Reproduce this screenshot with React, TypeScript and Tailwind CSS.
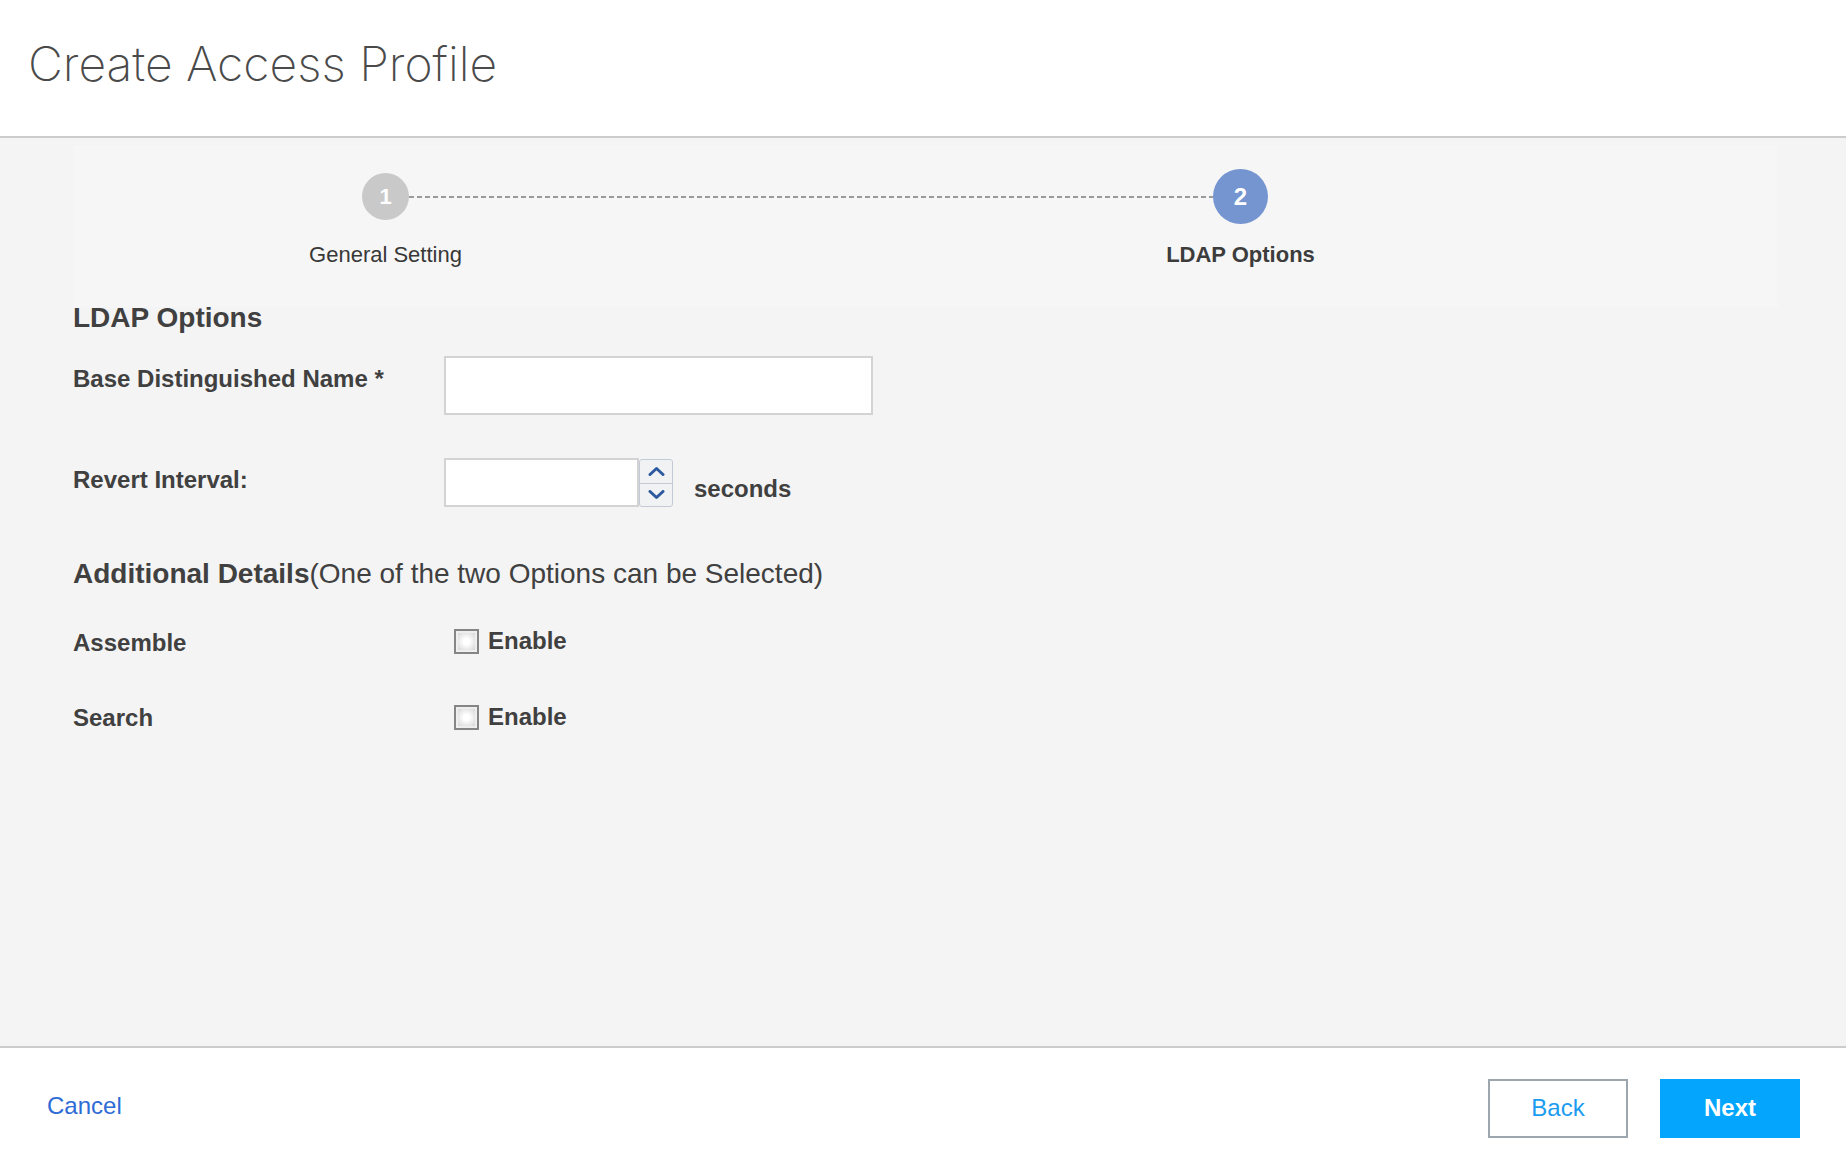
import React from "react";

function StepCircle({ n, active }: { n: number; active?: boolean }) {
  return (
    <div className="h-[55px] flex items-center justify-center">
      {active ? (
        <div className="h-[55px] w-[55px] rounded-full bg-[#7595d1] flex items-center justify-center text-white text-[24px] font-bold">
          {n}
        </div>
      ) : (
        <div className="h-[47px] w-[47px] rounded-full bg-[#c9c9c9] flex items-center justify-center text-white text-[22px] font-bold">
          {n}
        </div>
      )}
    </div>
  );
}

function Chevron({ up }: { up?: boolean }) {
  return (
    <svg width="17" height="10" viewBox="0 0 17 10" fill="none">
      <polyline
        points={up ? "2,8.5 8.5,2.5 15,8.5" : "2,1.5 8.5,7.5 15,1.5"}
        stroke="#2d5a9f"
        strokeWidth="3"
        strokeLinecap="round"
        strokeLinejoin="round"
      />
    </svg>
  );
}

function Checkbox() {
  return (
    <div className="h-[25px] w-[25px] border-2 border-[#858585] bg-[#eeeeee] p-[2px]">
      <div className="h-full w-full bg-[radial-gradient(circle,#ffffff_25%,#d6d6d6_100%)]" />
    </div>
  );
}

export default function App() {
  return (
    <div className="h-screen flex flex-col bg-white font-['Liberation_Sans',Arial,sans-serif] text-[#404040]">
      {/* title bar */}
      <div className="h-[138px] shrink-0 border-b-2 border-[#cccccc] flex items-center pl-[28px] pb-[8px]">
        <h1 className="font-['Inter',sans-serif] font-extralight text-[48px] tracking-[0px] text-[#4a4a4a]">
          Create Access Profile
        </h1>
      </div>

      {/* wizard body */}
      <div className="flex-1 bg-[#f4f4f4]">
        <div className="mt-[7px] ml-[73px] mr-[68px] h-[162px] bg-[#f6f6f6] pt-[24px] pl-[289px]">
          <div className="flex">
            <div className="w-[47px] flex flex-col items-center">
              <StepCircle n={1} />
              <div className="w-[240px] shrink-0 mt-[18px] text-center text-[22px] leading-[26px] text-[#383838]">
                General Setting
              </div>
            </div>
            <div className="w-[804px] h-[55px] flex items-center">
              <div className="w-full h-[2px] bg-[image:repeating-linear-gradient(to_right,#9a9a9a_0_5px,transparent_5px_8px)]" />
            </div>
            <div className="w-[55px] flex flex-col items-center">
              <StepCircle n={2} active />
              <div className="w-[240px] shrink-0 mt-[18px] text-center text-[22px] leading-[26px] font-bold text-[#3c3c3c]">
                LDAP Options
              </div>
            </div>
          </div>
        </div>

        <div className="pl-[73px]">
          <h2 className="-mt-[5px] text-[28px] leading-[32px] font-bold">LDAP Options</h2>

          <div className="mt-[22px] flex items-start">
            <label className="w-[371px] pt-[9px] text-[24px] leading-[28px] font-bold">
              Base Distinguished Name *
            </label>
            <input className="w-[429px] h-[59px] border-2 border-[#d3d3d3] bg-white outline-none" />
          </div>

          <div className="mt-[43px] flex items-start">
            <label className="w-[371px] pt-[8px] text-[24px] leading-[28px] font-bold">
              Revert Interval:
            </label>
            <input className="w-[195px] h-[49px] border-2 border-[#d3d3d3] bg-white outline-none" />
            <div className="mt-[1px] w-[34px] h-[48px] flex flex-col border border-[#c4cad5] rounded-[3px] bg-[#f1f2f4]">
              <div className="flex-1 flex items-center justify-center border-b border-[#c4cad5]">
                <Chevron up />
              </div>
              <div className="flex-1 flex items-center justify-center">
                <Chevron />
              </div>
            </div>
            <span className="ml-[21px] pt-[17px] text-[24px] leading-[28px] font-bold">seconds</span>
          </div>

          <div className="mt-[51px] text-[28px] leading-[32px]">
            <span className="font-bold">Additional Details</span>(One of the two Options can be Selected)
          </div>

          <div className="mt-[37px] flex items-start">
            <div className="w-[381px] pt-[2px] text-[24px] leading-[28px] font-bold">Assemble</div>
            <div className="mt-[2px]">
              <Checkbox />
            </div>
            <span className="ml-[9px] text-[24px] leading-[28px] font-bold">Enable</span>
          </div>

          <div className="mt-[46px] flex items-start">
            <div className="w-[381px] pt-[1px] text-[24px] leading-[28px] font-bold">Search</div>
            <div className="mt-[2px]">
              <Checkbox />
            </div>
            <span className="ml-[9px] text-[24px] leading-[28px] font-bold">Enable</span>
          </div>
        </div>
      </div>

      {/* footer actions */}
      <div className="h-[122px] shrink-0 border-t-2 border-[#cccccc] flex items-center justify-between pl-[47px] pr-[46px]">
        <button className="mb-[5px] text-[24px] text-[#2e6bd4]">Cancel</button>
        <div className="flex gap-[32px]">
          <button className="w-[140px] h-[59px] border-2 border-[#9ba6ae] bg-white text-[24px] text-[#1b9cf0]">
            Back
          </button>
          <button className="w-[140px] h-[59px] bg-[#04a6fd] text-[24px] font-bold text-white">
            Next
          </button>
        </div>
      </div>
    </div>
  );
}
